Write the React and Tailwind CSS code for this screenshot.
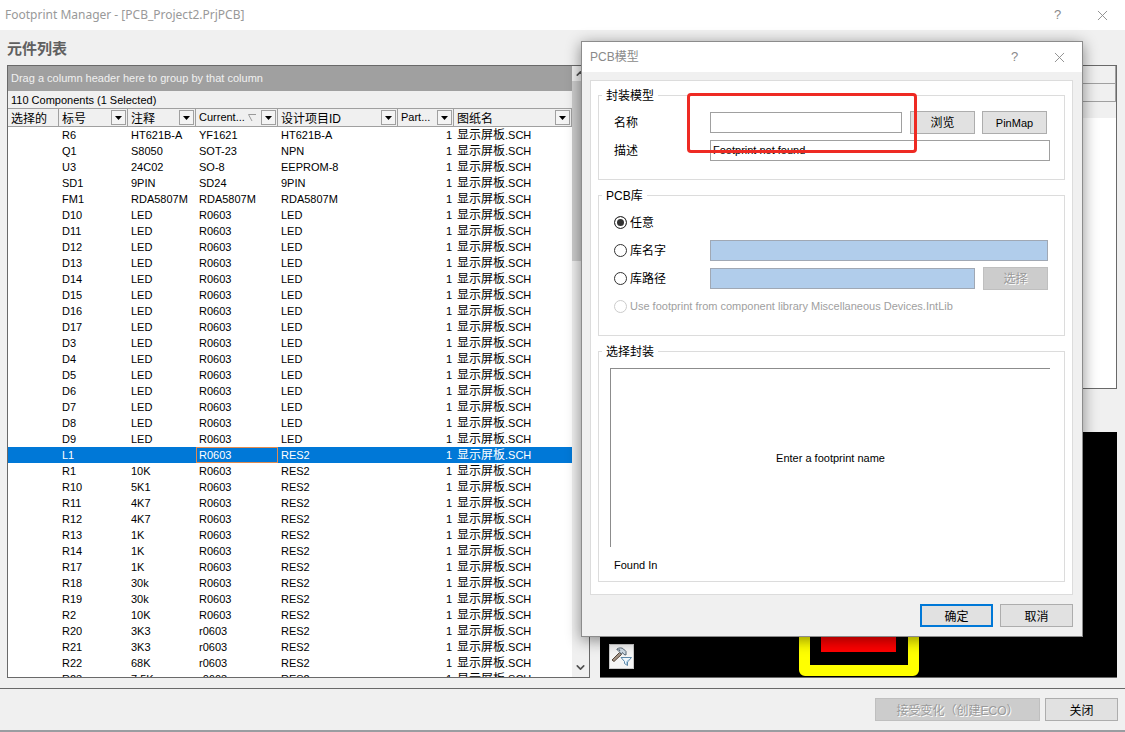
import React, { useState } from 'react';
import { ChevronDown, ChevronUp, X } from 'lucide-react';

const SHEET = '显示屏板';

const COLUMNS = [
  { title: '选择的', width: 'w-[51px]', filter: false },
  { title: '标号', width: 'w-[69px]', filter: true },
  { title: '注释', width: 'w-[68px]', filter: true },
  { title: 'Current...', width: 'w-[82px]', filter: true, latin: true, sorted: true },
  { title: '设计项目ID', width: 'w-[120px]', filter: true },
  { title: 'Part...', width: 'w-[56px]', filter: true, latin: true },
  { title: '图纸名', width: 'w-[118px]', filter: true }
];

const COMPONENTS = [
  ['R6', 'HT621B-A', 'YF1621', 'HT621B-A'],
  ['Q1', 'S8050', 'SOT-23', 'NPN'],
  ['U3', '24C02', 'SO-8', 'EEPROM-8'],
  ['SD1', '9PIN', 'SD24', '9PIN'],
  ['FM1', 'RDA5807M', 'RDA5807M', 'RDA5807M'],
  ['D10', 'LED', 'R0603', 'LED'],
  ['D11', 'LED', 'R0603', 'LED'],
  ['D12', 'LED', 'R0603', 'LED'],
  ['D13', 'LED', 'R0603', 'LED'],
  ['D14', 'LED', 'R0603', 'LED'],
  ['D15', 'LED', 'R0603', 'LED'],
  ['D16', 'LED', 'R0603', 'LED'],
  ['D17', 'LED', 'R0603', 'LED'],
  ['D3', 'LED', 'R0603', 'LED'],
  ['D4', 'LED', 'R0603', 'LED'],
  ['D5', 'LED', 'R0603', 'LED'],
  ['D6', 'LED', 'R0603', 'LED'],
  ['D7', 'LED', 'R0603', 'LED'],
  ['D8', 'LED', 'R0603', 'LED'],
  ['D9', 'LED', 'R0603', 'LED'],
  ['L1', '', 'R0603', 'RES2'],
  ['R1', '10K', 'R0603', 'RES2'],
  ['R10', '5K1', 'R0603', 'RES2'],
  ['R11', '4K7', 'R0603', 'RES2'],
  ['R12', '4K7', 'R0603', 'RES2'],
  ['R13', '1K', 'R0603', 'RES2'],
  ['R14', '1K', 'R0603', 'RES2'],
  ['R17', '1K', 'R0603', 'RES2'],
  ['R18', '30k', 'R0603', 'RES2'],
  ['R19', '30k', 'R0603', 'RES2'],
  ['R2', '10K', 'R0603', 'RES2'],
  ['R20', '3K3', 'r0603', 'RES2'],
  ['R21', '3K3', 'r0603', 'RES2'],
  ['R22', '68K', 'r0603', 'RES2'],
  ['R23', '7.5K', 'r0603', 'RES2']
];

const WindowButtons = () => (
  <div className="flex items-center">
    <button type="button" aria-label="Help" className="w-[45px] text-center text-[13px] text-[#8a8a8a]">?</button>
    <button type="button" aria-label="Close" className="flex w-[45px] justify-center text-[#8a8a8a]">
      <X size={17} strokeWidth={1.3} />
    </button>
  </div>
);

const PushButton = ({ children, className = '', disabled, primary }) => (
  <button
    type="button"
    disabled={disabled}
    className={`flex h-[23px] shrink-0 items-center justify-center bg-[#e1e1e1] pt-0.5 leading-4 disabled:border-[#bfbfbf] disabled:bg-[#cccccc] disabled:text-[#9a9a9a] disabled:[text-shadow:1px_1px_0_#fff] ${primary ? 'border-2 border-[#0078d7]' : 'border border-[#adadad]'} ${className}`}
  >
    {children}
  </button>
);

const HeaderCell = ({ column }) => (
  <th scope="col" className="border-b border-[#a0a0a0] p-0 font-normal">
    <div className="flex h-[17px] items-center border-r border-[#a0a0a0] pr-px pl-[3px]">
      <span className={`whitespace-nowrap ${column.latin ? 'text-[11px]' : 'pt-0.5 text-[12px]'}`}>
        {column.title}
      </span>
      {column.sorted && (
        <svg width="9" height="8" viewBox="0 0 9 8" className="ml-auto shrink-0">
          <path d="M0.5 0.5H8 M0.5 0.5L4 7" fill="none" stroke="#9a9a9a" />
        </svg>
      )}
      {column.filter && (
        <button
          type="button"
          aria-label={`${column.title} filter`}
          className={`flex size-[15px] shrink-0 items-center justify-center border border-[#a0a0a0] bg-[#f4f4f4] ${column.sorted ? 'ml-1' : 'ml-auto'}`}
        >
          <svg width="7" height="4" viewBox="0 0 7 4">
            <path d="M0 0H7L3.5 4Z" fill="#000" />
          </svg>
        </button>
      )}
    </div>
  </th>
);

const ComponentTable = ({ selected, onSelect }) => (
  <table className="w-full table-fixed border-collapse text-left">
    <colgroup>
      {COLUMNS.map((c) => <col key={c.title} className={c.width} />)}
    </colgroup>
    <thead className="bg-[#f0f0f0]">
      <tr>
        {COLUMNS.map((c) => <HeaderCell key={c.title} column={c} />)}
      </tr>
    </thead>
    <tbody>
      {COMPONENTS.map(([designator, comment, footprint, item]) => {
        const active = designator === selected;
        return (
          <tr
            key={designator}
            onClick={() => onSelect(designator)}
            className={`h-4 text-[11px] leading-4 whitespace-nowrap ${active ? 'bg-[#0078d7] text-white' : ''}`}
          >
            <td className="p-0" />
            <td className="py-0 pr-0 pl-[3px]">{designator}</td>
            <td className="py-0 pr-0 pl-[3px]">{comment}</td>
            <td className={`py-0 pr-0 pl-[3px] ${active ? 'outline outline-1 -outline-offset-1 outline-[#e08a50]' : ''}`}>{footprint}</td>
            <td className="py-0 pr-0 pl-[3px]">{item}</td>
            <td className="py-0 pr-0.5 pl-0 text-right">1</td>
            <td className="py-0 pr-0 pl-[3px]">
              <div className="h-4 overflow-hidden"><span className="text-[12px]">{SHEET}</span>.SCH</div>
            </td>
          </tr>
        );
      })}
    </tbody>
  </table>
);

const ScrollBar = () => (
  <div className="flex w-[17px] shrink-0 flex-col items-center bg-[#f0f0f0] text-[#505050]">
    <ChevronUp size={13} strokeWidth={3} className="my-px shrink-0" />
    <div className="h-[180px] w-full bg-[#cdcdcd]" />
    <ChevronDown size={13} strokeWidth={3} className="mt-auto mb-[3px] shrink-0" />
  </div>
);

const HammerIcon = () => (
  <svg width="23" height="23" viewBox="0 0 23 23" fill="none">
    <path d="M2 15L9.500 7.500L11.500 9.500L4 16.500Z" fill="#a39385" stroke="#54463a" strokeWidth="1" />
    <path d="M7 4C9 2.500 12 2.500 13.500 4L16 6.500V10L14 9.500L12.500 7.500L11.500 9L9 6.500L10 5L7 5Z" fill="#cfdbe5" stroke="#566775" strokeWidth="1" />
    <path d="M11 12.500H21.500L17.500 17V20.500L14.500 18.500V16.500Z" fill="#f0f8fe" stroke="#5b87a8" strokeWidth="1" />
    <path d="M18.500 14.500L16.500 17V19" stroke="#a9cce4" strokeWidth="1" />
  </svg>
);

const Preview = () => (
  <div className="relative flex flex-1 items-end justify-center border-b border-[#696969] bg-black pb-px">
    <div className="flex h-[200px] w-[120px] justify-center rounded-md border-[11px] border-[#ffff00] pb-[13px]">
      <div className="w-[75px] bg-[#ff0000]" />
    </div>
    <button
      type="button"
      aria-label="Preview options"
      className="absolute bottom-2 left-[9px] flex size-[25px] items-center justify-center border border-[#c8c8c8] bg-[#f5f5f5]"
    >
      <HammerIcon />
    </button>
  </div>
);

const GroupBox = ({ title, className = '', children }) => (
  <fieldset className={`min-w-0 border border-[#dcdcdc] pr-[14px] pl-[15px] ${className}`}>
    <legend className="-ml-3 px-1 pt-0.5 text-[12px] leading-4">{title}</legend>
    {children}
  </fieldset>
);

const LibraryOption = ({ id, label, latin, value, onChange, disabled, children }) => (
  <div className="flex h-7 items-center gap-2">
    <div className={`flex items-center gap-[3px] ${latin ? '' : 'w-[88px]'}`}>
      <input
        type="radio"
        id={id}
        name="library"
        checked={value === id}
        onChange={() => onChange(id)}
        disabled={disabled}
        className="size-[13px] shrink-0 appearance-none rounded-full border border-[#333] bg-white checked:bg-[#333] checked:shadow-[inset_0_0_0_2px_#fff] disabled:border-[#cccccc]"
      />
      <label
        htmlFor={id}
        className={`whitespace-nowrap ${latin ? 'text-[11px]' : 'pt-0.5 text-[12px]'} ${disabled ? 'text-[#a0a0a0]' : ''}`}
      >
        {label}
      </label>
    </div>
    {children}
  </div>
);

const ModelDialog = () => {
  const [name, setName] = useState('');
  const [description, setDescription] = useState('Footprint not found');
  const [library, setLibrary] = useState('any');

  return (
    <div
      role="dialog"
      aria-label="PCB模型"
      className="absolute top-[41px] right-[42px] w-[502px] border border-[#8c8c8c] bg-[#f0f0f0] shadow-[0_3px_14px_rgba(0,0,0,0.45)]"
    >
      <div className="flex h-[30px] items-center justify-between bg-white pl-2 text-[12px] text-[#8a8a8a]">
        <span>PCB模型</span>
        <WindowButtons />
      </div>

      <div className="pt-2 pr-[9px] pb-[9px] pl-2">
        <div className="flex flex-col gap-[6px] border border-[#dcdcdc] bg-white px-[7px] pt-[5px] pb-3">
          <GroupBox title="封装模型" className="pt-1 pb-[15px]">
            <div className="flex h-7 items-center">
              <label htmlFor="name" className="w-24 shrink-0 pt-0.5 text-[12px]">名称</label>
              <input
                id="name"
                value={name}
                onChange={(e) => setName(e.target.value)}
                className="h-[21px] w-[192px] min-w-0 border border-[#a0a0a0] bg-white px-0.5 text-[11px]"
              />
              <PushButton className="ml-2 w-[65px] text-[12px]">浏览</PushButton>
              <PushButton className="ml-[7px] w-[65px] text-[11px]">PinMap</PushButton>
            </div>
            <div className="flex h-7 items-center">
              <label htmlFor="description" className="w-24 shrink-0 pt-0.5 text-[12px]">描述</label>
              <input
                id="description"
                value={description}
                onChange={(e) => setDescription(e.target.value)}
                className="h-[21px] min-w-0 flex-1 border border-[#a0a0a0] bg-white px-0.5 text-[11px]"
              />
            </div>
          </GroupBox>

          <GroupBox title="PCB库" className="pt-1 pb-[15px]">
            <LibraryOption id="any" label="任意" value={library} onChange={setLibrary} />
            <LibraryOption id="libraryName" label="库名字" value={library} onChange={setLibrary}>
              <input
                aria-label="库名字"
                disabled
                className="mr-0.5 h-[21px] min-w-0 flex-1 border border-[#a0a8b4] bg-[#b1cdeb]"
              />
            </LibraryOption>
            <LibraryOption id="libraryPath" label="库路径" value={library} onChange={setLibrary}>
              <input
                aria-label="库路径"
                disabled
                className="h-[21px] min-w-0 flex-1 border border-[#a0a8b4] bg-[#b1cdeb]"
              />
              <PushButton disabled className="mr-0.5 w-[65px] text-[12px]">选择</PushButton>
            </LibraryOption>
            <LibraryOption
              id="integrated"
              label="Use footprint from component library Miscellaneous Devices.IntLib"
              latin
              disabled
              value={library}
              onChange={setLibrary}
            />
          </GroupBox>

          <GroupBox title="选择封装" className="pt-2 pb-2">
            <div className="-ml-1 flex h-[179px] items-center justify-center border-t border-l border-[#8c8c8c] text-[11px]">
              Enter a footprint name
            </div>
            <p className="mt-[10px] text-[11px] leading-4">Found In</p>
          </GroupBox>
        </div>

        <div className="mt-[9px] flex justify-end gap-[7px] text-[12px]">
          <PushButton primary className="w-[73px]">确定</PushButton>
          <PushButton className="w-[73px]">取消</PushButton>
        </div>
      </div>

      {/* highlight over the name field */}
      <div className="pointer-events-none absolute top-[51px] left-[105px] h-[60px] w-[230px] rounded border-[3px] border-[#ee2a23]" />
    </div>
  );
};

const App = () => {
  const [selected, setSelected] = useState('L1');

  return (
    <div className="relative flex h-screen flex-col overflow-hidden border-b-2 border-[#9a9da1] bg-[#f0f0f0] font-['Liberation_Sans','Noto_Sans_CJK_SC',sans-serif] text-[11px] text-black">
      <header className="flex h-[30px] shrink-0 items-center justify-between bg-white pl-[5px]">
        <h1 className="font-['Noto_Sans',sans-serif] text-[12px] text-[#999]">
          Footprint Manager - [PCB_Project2.PrjPCB]
        </h1>
        <WindowButtons />
      </header>

      <main className="flex min-h-0 flex-1 flex-col border-b border-[#696969] pr-2 pb-[10px] pl-[7px]">
        <h2 className="shrink-0 pt-[9px] pb-[7px] text-[15px] leading-[19px] font-bold text-[#606060]">元件列表</h2>
        <div className="flex min-h-0 flex-1 gap-[10px]">
          <section className="flex w-[583px] shrink-0 border border-[#696969] bg-white">
            <div className="min-w-0 flex-1 overflow-hidden">
              <div className="h-[25px] bg-[#a0a0a0] pl-[3px] leading-[25px] text-[#f0f0f0]">
                Drag a column header here to group by that column
              </div>
              <div className="h-[18px] border-b border-[#a0a0a0] bg-[#f0f0f0] pl-[3px] leading-[18px]">
                110 Components (1 Selected)
              </div>
              <ComponentTable selected={selected} onSelect={setSelected} />
            </div>
            <ScrollBar />
          </section>

          <div className="flex min-w-0 flex-1 flex-col gap-[43px]">
            <section className="h-[324px] border border-[#696969] bg-white">
              <div className="h-[18px] border-r border-b border-[#a0a0a0] bg-[#f0f0f0]" />
              <div className="h-[18px] border-r border-b border-[#a0a0a0] bg-[#f0f0f0]" />
              <div className="h-4 bg-[#f0f0f0]" />
            </section>
            <Preview />
          </div>
        </div>
      </main>

      <footer className="flex h-[41px] shrink-0 items-center justify-end gap-[5px] px-[7px] text-[12px]">
        <PushButton disabled className="w-[165px]">接受变化（创建ECO）</PushButton>
        <PushButton className="w-[73px]">关闭</PushButton>
      </footer>

      <ModelDialog />
    </div>
  );
};

export default App;
